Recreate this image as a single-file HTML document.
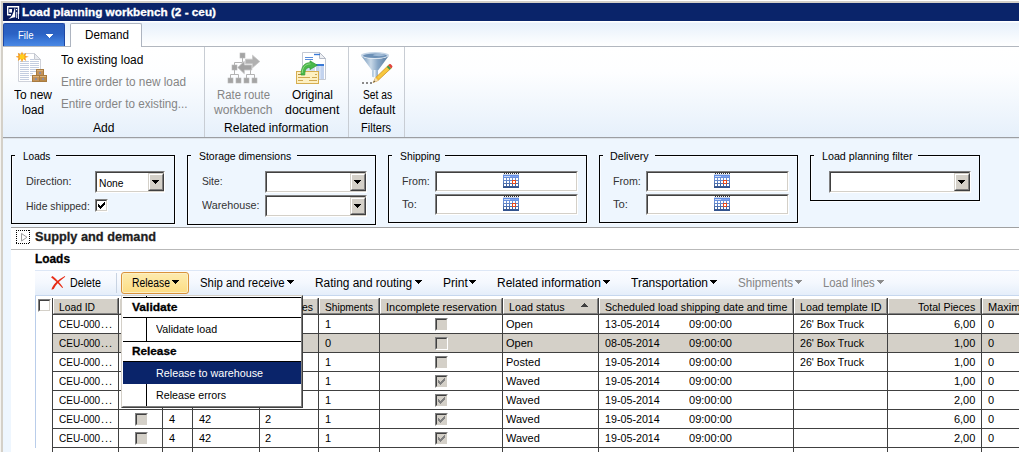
<!DOCTYPE html>
<html><head><meta charset="utf-8"><title>Load planning workbench</title>
<style>
html,body{margin:0;padding:0;}
html,body{overflow:hidden;background:#d4d0c8;}
#root{width:1019px;height:452px;overflow:hidden;position:relative;background:#d4d0c8;font-family:"Liberation Sans", "DejaVu Sans", sans-serif;font-size:11px;}
.t{position:absolute;white-space:nowrap;z-index:5;transform-origin:0 0;}

.a{position:absolute;}
#wl1{left:0;top:0;width:1px;bottom:0;background:#f4f3f0;}
#wl2{left:0;top:0;right:0;height:1px;background:#fff;}
#title{left:3px;top:3px;right:0;height:18px;background:#0a246a;}
#ticon{left:4px;top:4px;width:17px;height:16px;background:#071b58;}
#tabs{left:3px;top:21px;right:0;height:25px;background:linear-gradient(#ffffff 0,#ffffff 1px,#e7f0fb 2px,#f3f8fd 55%,#ffffff);}
#tabline{left:3px;top:46px;right:0;height:1px;background:#b2b7bf;}
#file{left:3px;top:23px;width:62px;height:23px;box-sizing:border-box;border:1px solid #1d46a3;border-bottom:none;border-radius:2px 2px 0 0;
  background:linear-gradient(#2a5cbb,#2b62c4 45%,#3b78d8 75%,#4a88e4);}
#filearrow{left:46px;top:34px;width:0;height:0;border-left:4px solid transparent;border-right:4px solid transparent;border-top:4px solid #fff;}
#demand{left:70px;top:23px;width:72px;height:24px;box-sizing:border-box;border:1px solid #adb4c0;border-bottom:none;border-radius:2px 2px 0 0;background:#fff;}
#ribbon{left:3px;top:47px;right:0;height:90px;background:linear-gradient(#ffffff,#fdfeff 28%,#e6f0fb);}
#ribline{left:3px;top:137px;right:0;height:2px;background:linear-gradient(#9c9ea2 50%,#dde3ea 50%);z-index:1;}
.rsep{top:47px;width:1px;height:90px;background:#c8cdd4;}
#farea{left:3px;top:138px;right:0;bottom:0;background:#eef6fe;}
.gb{box-sizing:border-box;border:1px solid #000;box-shadow:1px 1px 0 #fafcff,inset 1px 1px 0 #fafcff;}
.lg{background:#eef6fe;height:4px;}
.sunk{box-sizing:border-box;background:#fff;border:1px solid;border-color:#808080 #fff #fff #808080;}
.sunk>i{position:absolute;left:0;top:0;right:0;bottom:0;border:1px solid;border-color:#404040 #d4d0c8 #d4d0c8 #404040;}
.btn{box-sizing:border-box;background:#d4d0c8;border:1px solid;border-color:#d4d0c8 #404040 #404040 #d4d0c8;}
.btn>i{position:absolute;left:0;top:0;right:0;bottom:0;border:1px solid;border-color:#fff #808080 #808080 #fff;}
.darr{width:0;height:0;border-left:4px solid transparent;border-right:4px solid transparent;border-top:4px solid #000;}
#white{left:11px;top:228px;right:0;bottom:0;background:#fff;}
#wline{left:11px;top:227px;right:0;height:1px;background:#a0a0a0;}
#sline{left:11px;top:249px;right:0;height:1px;background:#b9b9b9;}
#tbar{left:35px;top:270px;right:0;height:25px;background:linear-gradient(#dde7f6 0,#dde7f6 1px,#fbfcff 1px,#f4f8fe 50%,#e5eefa);}
#tbline{left:35px;top:295px;right:0;height:1px;background:#c6d7ee;}
#tbsep{left:116px;top:273px;width:1px;height:20px;background:#c8d3e2;}
#relbtn{left:121px;top:272px;width:68px;height:22px;box-sizing:border-box;border:1px solid #d9923c;border-radius:3px;background:linear-gradient(#fdebb0,#fde499 50%,#fcdc84);box-shadow:inset 0 0 0 1px #fdf0c4;}
.marr{width:0;height:0;border-left:4px solid transparent;border-right:4px solid transparent;border-top:5px solid #000;}
.marr.dis{border-top-color:#8d8d8d;}
.vl{width:1px;background:#404040;}
.hl{height:1px;background:#404040;}
.hc{box-sizing:border-box;background:#d4d0c8;border:1px solid;border-color:#fff #808080 #808080 #fff;}
.cb{box-sizing:border-box;width:13px;height:13px;background:#d4d0c8;border:1px solid;border-color:#808080 #fff #fff #808080;}
.cb>i{position:absolute;left:0;top:0;right:0;bottom:0;border:1px solid;border-color:#404040 #d4d0c8 #d4d0c8 #404040;}
#menu{left:121px;top:295px;width:182px;height:113px;box-sizing:border-box;background:#fff;border:1px solid;border-color:#d4d0c8 #404040 #404040 #d4d0c8;z-index:3;}
#menu>i{position:absolute;left:0;top:0;right:0;bottom:0;border:1px solid;border-color:#fff #808080 #808080 #fff;}
.ml{background:#000;z-index:4;}
#msel{left:123px;top:362px;width:178px;height:22px;background:#0a246a;z-index:4;}

</style></head><body>
<div id="root">
<div class="a" id="wl1"></div><div class="a" id="wl2"></div>
<div class="a" id="title"></div>
<svg class="a" style="left:4px;top:3px" width="17" height="18" viewBox="0 0 17 18">
<rect width="17" height="18" fill="#06185a"/>
<path d="M3 3h12.200v8h-1.400V4.600H4.400V11H7v1.500H3z" fill="#fff"/>
<rect x="5.200" y="6" width="2.800" height="3.600" fill="#fff"/>
<path d="M4 16.200C7.500 14.800 9.500 10.500 10.500 5.300L11.200 5.300 11.200 14.200 8.500 14.700z" fill="#fff"/>
<rect x="12" y="6" width="1.200" height="1.200" fill="#fff"/>
<rect x="12.200" y="9" width="1" height="6" fill="#e8ecf8"/><rect x="14" y="11" width="1" height="5" fill="#e8ecf8"/>
</svg>
<div class="a" id="tabs"></div><div class="a" id="tabline"></div>
<div class="a" id="file"></div><svg class="a" style="left:46px;top:34px" width="7" height="4" viewBox="0 0 7 4" shape-rendering="crispEdges"><path d="M0 0h7v1h-1v1h-1v1h-1v1h-1v-1h-1v-1h-1v-1h-1z" fill="#fff"/></svg>
<div class="a" id="ribbon"></div><div class="a" id="ribline"></div>
<div class="a" id="demand"></div>
<div class="a rsep" style="left:204px"></div>
<div class="a rsep" style="left:348px"></div>
<div class="a rsep" style="left:404px"></div>

<!-- to new load -->
<svg class="a" style="left:16px;top:51px" width="32" height="32" viewBox="0 0 32 32">
<path d="M2.500 2.500h16l6 6v22h-22z" fill="#fff" stroke="#cfd2da"/>
<path d="M18.500 2.500v6h6z" fill="#e9ebf0" stroke="#c4c8d0"/>
<path d="M4 10.500h9M4 12.500h9M4 14.500h9M4 16.500h9M4 18.500h9M4 20.500h9M4 22.500h9M4 24.500h9M4 26.500h9M4 28.500h9M14 8.500h4M14 10.500h9M14 12.500h9M14 14.500h9M14 16.500h9M14 18.500h6M14 20.500h6M14 22.500h3M14 24.500h2" stroke="#c3cde0"/>
<path d="M6 0.500l1.300 3.200 2.900-2-0.800 3.300 3.400 0.700-3.400 1 0.800 3.300-2.900-2L6 11.200 4.700 8 1.800 10l0.800-3.300-3.400-1 3.400-0.700L1.800 1.700l2.900 2z" fill="#f89c1c"/>
<circle cx="6" cy="5.800" r="2.600" fill="#ffcf1f"/>
<rect x="20.500" y="18.500" width="7" height="6" fill="#c4935a" stroke="#a87b40"/>
<rect x="16.500" y="24.500" width="7" height="6" fill="#c4935a" stroke="#a87b40"/>
<rect x="23.500" y="24.500" width="7" height="6" fill="#b98a4a" stroke="#a87b40"/>
<path d="M21 19.500h6M17 25.500h6M24 25.500h6" stroke="#dcb27c"/>
<rect x="23" y="21" width="2" height="2" fill="#8c8ca0"/><rect x="19" y="27" width="2" height="2" fill="#8c8ca0"/><rect x="26" y="27" width="2" height="2" fill="#8c8ca0"/>
</svg>
<!-- rate route workbench (disabled) -->
<svg class="a" style="left:227px;top:52px" width="34" height="32" viewBox="0 0 34 32">
<path d="M15.500 6v4.500M7.500 13v-2.500h8M7.500 18v4.500M3.500 26v-3.500h8v3.500M19.500 26v-3.500h8v3.500M23.500 18v4.500" fill="none" stroke="#b4b4b4"/>
<g fill="#a4a4a4" stroke="#b8b8b8" stroke-width="0.600">
<rect x="13" y="1" width="5" height="5"/>
<rect x="5" y="13" width="5" height="5"/>
<rect x="1" y="26" width="5" height="5"/><rect x="9" y="26" width="5" height="5"/><rect x="17" y="26" width="5" height="5"/><rect x="25" y="26" width="5" height="5"/>
</g>
<path d="M18.500 7.200H25.500V3.200L32.800 9.500 25.500 15.800V11.800H18.500z" fill="#b0b0b0" stroke="#c6c6c6" stroke-width="0.800"/>
<path d="M24.800 13H17.300V9.300L10.700 15.500 17.300 21.700V18H24.800z" fill="#a2a2a2" stroke="#c6c6c6" stroke-width="0.800"/>
</svg>
<!-- original document -->
<svg class="a" style="left:295px;top:51px" width="33" height="33" viewBox="0 0 33 33">
<path d="M7.500 1.500h17l6 6v21h-23z" fill="#fff" stroke="#c3c8d2"/>
<path d="M24.500 1.500v6h6z" fill="#eef0f4" stroke="#b4bac6"/>
<path d="M19 3.500h6" stroke="#3b7ad6" stroke-width="1.400"/>
<path d="M10 6.500h8M10 8.500h8" stroke="#5a8edc" stroke-width="1"/>
<rect x="11" y="13" width="9" height="8" fill="#d3def2"/>
<rect x="21" y="13" width="8" height="15" fill="#c3d3ee"/>
<rect x="21" y="13" width="8" height="2" fill="#3b7ad6"/>
<path d="M25 15v13" stroke="#e4ecf8"/>
<rect x="1.500" y="20.500" width="22" height="12" fill="#fdf0c2" stroke="#d6ae50"/>
<path d="M3 23.500h6M3 26.500h12M17 26.500h5M3 29.500h5M14 29.500h8M20 23.500h2" stroke="#cfa850"/>
<path d="M3 23.500h6" stroke="#b08a3c"/>
<path d="M6 24C6 16 9 11.700 15 11.700V9.800L22.300 14.200 15 18.600V16.400C11.500 16.400 9.800 18.500 9.800 24z" fill="#49b84a" stroke="#2f9a33" stroke-width="0.700"/>
<path d="M7.200 22C7.400 16.500 10 13 15.500 12.900" fill="none" stroke="#9be08c" stroke-width="0.900"/>
</svg>
<!-- filter -->
<svg class="a" style="left:360px;top:51px" width="33" height="33" viewBox="0 0 33 33">
<defs><linearGradient id="fg" x1="0" x2="1"><stop offset="0" stop-color="#6d93b8"/><stop offset="0.350" stop-color="#c9d9e8"/><stop offset="0.600" stop-color="#87a6c6"/><stop offset="1" stop-color="#55799e"/></linearGradient>
<linearGradient id="fs" x1="0" x2="1"><stop offset="0" stop-color="#8fb0cf"/><stop offset="0.400" stop-color="#e4eef7"/><stop offset="1" stop-color="#7a9cc0"/></linearGradient></defs>
<path d="M1 4.500C3 7 9 7.800 15 7.800S27 7 29 4.500L18 19.500H12z" fill="url(#fg)"/>
<rect x="12.300" y="19" width="5.500" height="7.300" rx="1" fill="url(#fs)"/>
<ellipse cx="15" cy="4.200" rx="14" ry="3.100" fill="#c3d4e6"/>
<ellipse cx="15" cy="4.700" rx="12" ry="2.200" fill="#6c90b6"/>
<ellipse cx="19" cy="4" rx="6" ry="1.200" fill="#9fbad6"/>
<rect x="2" y="31" width="2" height="2" fill="#8a8a8a"/><rect x="6" y="31" width="2" height="2" fill="#8a8a8a"/><rect x="10" y="31" width="2" height="2" fill="#8a8a8a"/>
<path d="M13.200 31.500l2.300-4.700L29.200 13.600l2.800 2.800L18 29.500z" fill="#f7c83e" stroke="#c98a1e" stroke-width="0.700"/>
<path d="M16.500 26l2.300 2.400" stroke="#e6a82a" stroke-width="0.800"/>
<path d="M13.200 31.500l2.300-4.700 2.500 2.700z" fill="#f3dcb4"/>
<path d="M13.200 31.500l1-2 1 1z" fill="#444"/>
<path d="M26.800 15.900l2.800 2.800 1.300-1.300-2.800-2.800z" fill="#3f9a52"/>
<path d="M28.300 14.400l2.800 2.800 1.300-1.300c0.600-0.800-2-3.400-2.800-2.800z" fill="#e0443e"/>
</svg>

<div class="a" id="farea"></div>
<div class="a gb" style="left:11px;top:155px;width:164px;height:69px"></div><div class="a lg" style="left:15px;top:154px;width:41px"></div>
<div class="a gb" style="left:187px;top:155px;width:189px;height:70px"></div><div class="a lg" style="left:191px;top:154px;width:106px"></div>
<div class="a gb" style="left:388px;top:155px;width:199px;height:68px"></div><div class="a lg" style="left:392px;top:154px;width:53px"></div>
<div class="a gb" style="left:599px;top:155px;width:199px;height:68px"></div><div class="a lg" style="left:603px;top:154px;width:52px"></div>
<div class="a gb" style="left:810px;top:155px;width:170px;height:46px"></div><div class="a lg" style="left:814px;top:154px;width:104px"></div>
<div class="a sunk" style="left:95px;top:171px;width:70px;height:22px"><i></i></div><div class="a btn" style="left:148px;top:173px;width:16px;height:18px"><i></i></div><svg class="a" style="left:152px;top:180px" width="7" height="4" viewBox="0 0 7 4" shape-rendering="crispEdges"><path d="M0 0h7v1h-1v1h-1v1h-1v1h-1v-1h-1v-1h-1v-1h-1z" fill="#000"/></svg>
<div class="a cb" style="left:95px;top:199px;background:#fff"><i></i></div><svg class="a" style="left:98px;top:202px" width="7" height="7" viewBox="0 0 7 7" shape-rendering="crispEdges"><path d="M0 2h1v1h1v1h1v-1h1v-1h1v-1h1v-1h1v3h-1v1h-1v1h-1v1h-1v1h-1v-1h-1v-1h-1z" fill="#000"/></svg>
<div class="a sunk" style="left:265px;top:171px;width:102px;height:22px"><i></i></div><div class="a btn" style="left:350px;top:173px;width:16px;height:18px"><i></i></div><svg class="a" style="left:354px;top:180px" width="7" height="4" viewBox="0 0 7 4" shape-rendering="crispEdges"><path d="M0 0h7v1h-1v1h-1v1h-1v1h-1v-1h-1v-1h-1v-1h-1z" fill="#000"/></svg>
<div class="a sunk" style="left:265px;top:195px;width:102px;height:22px"><i></i></div><div class="a btn" style="left:350px;top:197px;width:16px;height:18px"><i></i></div><svg class="a" style="left:354px;top:204px" width="7" height="4" viewBox="0 0 7 4" shape-rendering="crispEdges"><path d="M0 0h7v1h-1v1h-1v1h-1v1h-1v-1h-1v-1h-1v-1h-1z" fill="#000"/></svg>
<div class="a sunk" style="left:435px;top:171px;width:143px;height:21px"><i></i></div>
<div class="a sunk" style="left:435px;top:194px;width:143px;height:21px"><i></i></div>
<svg class="a" style="left:503px;top:173px" width="16" height="15" viewBox="0 0 16 15" shape-rendering="crispEdges">
<defs><linearGradient id="cg" x1="0" y1="0" x2="0" y2="1"><stop offset="0" stop-color="#5c8cec"/><stop offset="0.350" stop-color="#6e92d6"/><stop offset="1" stop-color="#2f4f88"/></linearGradient></defs>
<rect x="0" y="1" width="16" height="14" fill="url(#cg)"/>
<rect x="0" y="1" width="16" height="1" fill="#c9d4ea"/>
<rect x="1" y="3" width="6" height="1" fill="#c4d6f8"/><rect x="7" y="3" width="8" height="1" fill="#7ea2f0"/>
<g fill="#303030"><rect x="1" y="0" width="1" height="1"/><rect x="3" y="0" width="1" height="1"/><rect x="5" y="0" width="1" height="1"/><rect x="7" y="0" width="1" height="1"/><rect x="9" y="0" width="1" height="1"/><rect x="11" y="0" width="1" height="1"/><rect x="13" y="0" width="1" height="1"/><rect x="15" y="0" width="1" height="1"/></g>
<g fill="#fff"><rect x="1" y="5" width="2" height="2"/><rect x="4" y="5" width="2" height="2"/><rect x="7" y="5" width="2" height="2"/><rect x="10" y="5" width="2" height="2"/><rect x="13" y="5" width="2" height="2"/><rect x="1" y="8" width="2" height="2"/><rect x="4" y="8" width="2" height="2"/><rect x="7" y="8" width="2" height="2"/><rect x="10" y="8" width="2" height="2"/><rect x="13" y="8" width="2" height="2"/><rect x="1" y="11" width="2" height="2"/><rect x="4" y="11" width="2" height="2"/><rect x="7" y="11" width="2" height="2"/><rect x="10" y="11" width="2" height="2"/><rect x="13" y="11" width="2" height="2"/></g>
<rect x="9" y="7" width="4" height="4" fill="#e8481a"/><rect x="10" y="8" width="2" height="2" fill="#fff"/>
</svg>
<svg class="a" style="left:503px;top:196px" width="16" height="15" viewBox="0 0 16 15" shape-rendering="crispEdges">
<defs><linearGradient id="cg" x1="0" y1="0" x2="0" y2="1"><stop offset="0" stop-color="#5c8cec"/><stop offset="0.350" stop-color="#6e92d6"/><stop offset="1" stop-color="#2f4f88"/></linearGradient></defs>
<rect x="0" y="1" width="16" height="14" fill="url(#cg)"/>
<rect x="0" y="1" width="16" height="1" fill="#c9d4ea"/>
<rect x="1" y="3" width="6" height="1" fill="#c4d6f8"/><rect x="7" y="3" width="8" height="1" fill="#7ea2f0"/>
<g fill="#303030"><rect x="1" y="0" width="1" height="1"/><rect x="3" y="0" width="1" height="1"/><rect x="5" y="0" width="1" height="1"/><rect x="7" y="0" width="1" height="1"/><rect x="9" y="0" width="1" height="1"/><rect x="11" y="0" width="1" height="1"/><rect x="13" y="0" width="1" height="1"/><rect x="15" y="0" width="1" height="1"/></g>
<g fill="#fff"><rect x="1" y="5" width="2" height="2"/><rect x="4" y="5" width="2" height="2"/><rect x="7" y="5" width="2" height="2"/><rect x="10" y="5" width="2" height="2"/><rect x="13" y="5" width="2" height="2"/><rect x="1" y="8" width="2" height="2"/><rect x="4" y="8" width="2" height="2"/><rect x="7" y="8" width="2" height="2"/><rect x="10" y="8" width="2" height="2"/><rect x="13" y="8" width="2" height="2"/><rect x="1" y="11" width="2" height="2"/><rect x="4" y="11" width="2" height="2"/><rect x="7" y="11" width="2" height="2"/><rect x="10" y="11" width="2" height="2"/><rect x="13" y="11" width="2" height="2"/></g>
<rect x="9" y="7" width="4" height="4" fill="#e8481a"/><rect x="10" y="8" width="2" height="2" fill="#fff"/>
</svg>
<div class="a sunk" style="left:646px;top:171px;width:143px;height:21px"><i></i></div>
<div class="a sunk" style="left:646px;top:194px;width:143px;height:21px"><i></i></div>
<svg class="a" style="left:714px;top:173px" width="16" height="15" viewBox="0 0 16 15" shape-rendering="crispEdges">
<defs><linearGradient id="cg" x1="0" y1="0" x2="0" y2="1"><stop offset="0" stop-color="#5c8cec"/><stop offset="0.350" stop-color="#6e92d6"/><stop offset="1" stop-color="#2f4f88"/></linearGradient></defs>
<rect x="0" y="1" width="16" height="14" fill="url(#cg)"/>
<rect x="0" y="1" width="16" height="1" fill="#c9d4ea"/>
<rect x="1" y="3" width="6" height="1" fill="#c4d6f8"/><rect x="7" y="3" width="8" height="1" fill="#7ea2f0"/>
<g fill="#303030"><rect x="1" y="0" width="1" height="1"/><rect x="3" y="0" width="1" height="1"/><rect x="5" y="0" width="1" height="1"/><rect x="7" y="0" width="1" height="1"/><rect x="9" y="0" width="1" height="1"/><rect x="11" y="0" width="1" height="1"/><rect x="13" y="0" width="1" height="1"/><rect x="15" y="0" width="1" height="1"/></g>
<g fill="#fff"><rect x="1" y="5" width="2" height="2"/><rect x="4" y="5" width="2" height="2"/><rect x="7" y="5" width="2" height="2"/><rect x="10" y="5" width="2" height="2"/><rect x="13" y="5" width="2" height="2"/><rect x="1" y="8" width="2" height="2"/><rect x="4" y="8" width="2" height="2"/><rect x="7" y="8" width="2" height="2"/><rect x="10" y="8" width="2" height="2"/><rect x="13" y="8" width="2" height="2"/><rect x="1" y="11" width="2" height="2"/><rect x="4" y="11" width="2" height="2"/><rect x="7" y="11" width="2" height="2"/><rect x="10" y="11" width="2" height="2"/><rect x="13" y="11" width="2" height="2"/></g>
<rect x="9" y="7" width="4" height="4" fill="#e8481a"/><rect x="10" y="8" width="2" height="2" fill="#fff"/>
</svg>
<svg class="a" style="left:714px;top:196px" width="16" height="15" viewBox="0 0 16 15" shape-rendering="crispEdges">
<defs><linearGradient id="cg" x1="0" y1="0" x2="0" y2="1"><stop offset="0" stop-color="#5c8cec"/><stop offset="0.350" stop-color="#6e92d6"/><stop offset="1" stop-color="#2f4f88"/></linearGradient></defs>
<rect x="0" y="1" width="16" height="14" fill="url(#cg)"/>
<rect x="0" y="1" width="16" height="1" fill="#c9d4ea"/>
<rect x="1" y="3" width="6" height="1" fill="#c4d6f8"/><rect x="7" y="3" width="8" height="1" fill="#7ea2f0"/>
<g fill="#303030"><rect x="1" y="0" width="1" height="1"/><rect x="3" y="0" width="1" height="1"/><rect x="5" y="0" width="1" height="1"/><rect x="7" y="0" width="1" height="1"/><rect x="9" y="0" width="1" height="1"/><rect x="11" y="0" width="1" height="1"/><rect x="13" y="0" width="1" height="1"/><rect x="15" y="0" width="1" height="1"/></g>
<g fill="#fff"><rect x="1" y="5" width="2" height="2"/><rect x="4" y="5" width="2" height="2"/><rect x="7" y="5" width="2" height="2"/><rect x="10" y="5" width="2" height="2"/><rect x="13" y="5" width="2" height="2"/><rect x="1" y="8" width="2" height="2"/><rect x="4" y="8" width="2" height="2"/><rect x="7" y="8" width="2" height="2"/><rect x="10" y="8" width="2" height="2"/><rect x="13" y="8" width="2" height="2"/><rect x="1" y="11" width="2" height="2"/><rect x="4" y="11" width="2" height="2"/><rect x="7" y="11" width="2" height="2"/><rect x="10" y="11" width="2" height="2"/><rect x="13" y="11" width="2" height="2"/></g>
<rect x="9" y="7" width="4" height="4" fill="#e8481a"/><rect x="10" y="8" width="2" height="2" fill="#fff"/>
</svg>
<div class="a sunk" style="left:829px;top:171px;width:142px;height:22px"><i></i></div><div class="a btn" style="left:954px;top:173px;width:16px;height:18px"><i></i></div><svg class="a" style="left:958px;top:180px" width="7" height="4" viewBox="0 0 7 4" shape-rendering="crispEdges"><path d="M0 0h7v1h-1v1h-1v1h-1v1h-1v-1h-1v-1h-1v-1h-1z" fill="#000"/></svg>
<div class="a" id="wline"></div><div class="a" id="white"></div><div class="a" id="sline"></div>
<svg class="a" style="left:16px;top:230px" width="14" height="14" viewBox="0 0 14 14">
<path d="M0.500 0v14M13.500 0v14M0 0.500h14M0 13.500h14" fill="none" stroke="#000" stroke-dasharray="1 1" shape-rendering="crispEdges"/>
<path d="M5.500 3.500v7.500l5.500-3.750z" fill="#fff" stroke="#9c9c9c"/></svg>
<div class="a" id="tbar"></div><div class="a" id="tbline"></div><div class="a" id="tbsep"></div>
<svg class="a" style="left:50px;top:275px" width="16" height="16" viewBox="0 0 16 16">
<path d="M1 2.300L2.600 1C6.500 4 10.200 8.300 13.100 12.400L12.300 13C9 9.300 5 5.200 1 2.300z" fill="#e8301a"/>
<path d="M14.900 1.100L15.200 1.800C10.500 5 6 9.500 3.700 14L1.500 14.700C2.200 10.500 8 4.500 14.900 1.100z" fill="#e62a14"/></svg>
<div class="a" id="relbtn"></div>
<svg class="a" style="left:172px;top:280px" width="7" height="4" viewBox="0 0 7 4" shape-rendering="crispEdges"><path d="M0 0h7v1h-1v1h-1v1h-1v1h-1v-1h-1v-1h-1v-1h-1z" fill="#000"/></svg>
<svg class="a" style="left:287px;top:280px" width="7" height="4" viewBox="0 0 7 4" shape-rendering="crispEdges"><path d="M0 0h7v1h-1v1h-1v1h-1v1h-1v-1h-1v-1h-1v-1h-1z" fill="#000"/></svg>
<svg class="a" style="left:415px;top:280px" width="7" height="4" viewBox="0 0 7 4" shape-rendering="crispEdges"><path d="M0 0h7v1h-1v1h-1v1h-1v1h-1v-1h-1v-1h-1v-1h-1z" fill="#000"/></svg>
<svg class="a" style="left:469px;top:280px" width="7" height="4" viewBox="0 0 7 4" shape-rendering="crispEdges"><path d="M0 0h7v1h-1v1h-1v1h-1v1h-1v-1h-1v-1h-1v-1h-1z" fill="#000"/></svg>
<svg class="a" style="left:603px;top:280px" width="7" height="4" viewBox="0 0 7 4" shape-rendering="crispEdges"><path d="M0 0h7v1h-1v1h-1v1h-1v1h-1v-1h-1v-1h-1v-1h-1z" fill="#000"/></svg>
<svg class="a" style="left:710px;top:280px" width="7" height="4" viewBox="0 0 7 4" shape-rendering="crispEdges"><path d="M0 0h7v1h-1v1h-1v1h-1v1h-1v-1h-1v-1h-1v-1h-1z" fill="#000"/></svg>
<svg class="a" style="left:795px;top:280px" width="7" height="4" viewBox="0 0 7 4" shape-rendering="crispEdges"><path d="M0 0h7v1h-1v1h-1v1h-1v1h-1v-1h-1v-1h-1v-1h-1z" fill="#8d8d8d"/></svg>
<svg class="a" style="left:877px;top:280px" width="7" height="4" viewBox="0 0 7 4" shape-rendering="crispEdges"><path d="M0 0h7v1h-1v1h-1v1h-1v1h-1v-1h-1v-1h-1v-1h-1z" fill="#8d8d8d"/></svg>
<div class="a" style="left:35px;top:296px;width:1px;height:152px;background:#b9cdea"></div>
<div class="a cb" style="left:38px;top:299px;background:#fff"><i></i></div>
<div class="a" style="left:53px;top:334px;right:0;height:18px;background:#d4d0c8"></div>
<div class="a hc" style="left:53px;top:298px;width:65px;height:16px"></div>
<div class="a hc" style="left:119px;top:298px;width:43px;height:16px"></div>
<div class="a hc" style="left:163px;top:298px;width:29px;height:16px"></div>
<div class="a hc" style="left:193px;top:298px;width:66px;height:16px"></div>
<div class="a hc" style="left:260px;top:298px;width:58px;height:16px"></div>
<div class="a hc" style="left:319px;top:298px;width:60px;height:16px"></div>
<div class="a hc" style="left:380px;top:298px;width:122px;height:16px"></div>
<div class="a hc" style="left:503px;top:298px;width:95px;height:16px"></div>
<div class="a hc" style="left:599px;top:298px;width:194px;height:16px"></div>
<div class="a hc" style="left:794px;top:298px;width:93px;height:16px"></div>
<div class="a hc" style="left:888px;top:298px;width:93px;height:16px"></div>
<div class="a hc" style="left:982px;top:298px;width:48px;height:16px"></div>
<div class="a vl" style="left:52px;top:298px;bottom:0"></div>
<div class="a vl" style="left:118px;top:298px;bottom:0"></div>
<div class="a vl" style="left:162px;top:298px;bottom:0"></div>
<div class="a vl" style="left:192px;top:298px;bottom:0"></div>
<div class="a vl" style="left:259px;top:298px;bottom:0"></div>
<div class="a vl" style="left:318px;top:298px;bottom:0"></div>
<div class="a vl" style="left:379px;top:298px;bottom:0"></div>
<div class="a vl" style="left:502px;top:298px;bottom:0"></div>
<div class="a vl" style="left:598px;top:298px;bottom:0"></div>
<div class="a vl" style="left:793px;top:298px;bottom:0"></div>
<div class="a vl" style="left:887px;top:298px;bottom:0"></div>
<div class="a vl" style="left:981px;top:298px;bottom:0"></div>
<div class="a hl" style="left:52px;top:314px;right:0"></div>
<div class="a hl" style="left:52px;top:333px;right:0"></div>
<div class="a hl" style="left:52px;top:352px;right:0"></div>
<div class="a hl" style="left:52px;top:371px;right:0"></div>
<div class="a hl" style="left:52px;top:390px;right:0"></div>
<div class="a hl" style="left:52px;top:409px;right:0"></div>
<div class="a hl" style="left:52px;top:428px;right:0"></div>
<div class="a hl" style="left:52px;top:447px;right:0"></div>
<svg class="a" style="left:581px;top:303px" width="7" height="4" viewBox="0 0 7 4" shape-rendering="crispEdges"><path d="M3 0h1v1h1v1h1v1h1v1h-7v-1h1v-1h1v-1h1z" fill="#404040"/></svg>
<div class="a cb" style="left:435px;top:318px;background:#d4d0c8"><i></i></div>
<div class="a cb" style="left:435px;top:337px;background:#d4d0c8"><i></i></div>
<div class="a cb" style="left:435px;top:356px;background:#d4d0c8"><i></i></div>
<div class="a cb" style="left:435px;top:375px;background:#d4d0c8"><i></i></div><svg class="a" style="left:438px;top:378px" width="7" height="7" viewBox="0 0 7 7" shape-rendering="crispEdges"><path d="M0 2h1v1h1v1h1v-1h1v-1h1v-1h1v-1h1v3h-1v1h-1v1h-1v1h-1v1h-1v-1h-1v-1h-1z" fill="#808080"/></svg>
<div class="a cb" style="left:435px;top:394px;background:#d4d0c8"><i></i></div><svg class="a" style="left:438px;top:397px" width="7" height="7" viewBox="0 0 7 7" shape-rendering="crispEdges"><path d="M0 2h1v1h1v1h1v-1h1v-1h1v-1h1v-1h1v3h-1v1h-1v1h-1v1h-1v1h-1v-1h-1v-1h-1z" fill="#808080"/></svg>
<div class="a cb" style="left:435px;top:413px;background:#d4d0c8"><i></i></div><svg class="a" style="left:438px;top:416px" width="7" height="7" viewBox="0 0 7 7" shape-rendering="crispEdges"><path d="M0 2h1v1h1v1h1v-1h1v-1h1v-1h1v-1h1v3h-1v1h-1v1h-1v1h-1v1h-1v-1h-1v-1h-1z" fill="#808080"/></svg>
<div class="a cb" style="left:135px;top:413px;background:#d4d0c8"><i></i></div>
<div class="a cb" style="left:435px;top:432px;background:#d4d0c8"><i></i></div><svg class="a" style="left:438px;top:435px" width="7" height="7" viewBox="0 0 7 7" shape-rendering="crispEdges"><path d="M0 2h1v1h1v1h1v-1h1v-1h1v-1h1v-1h1v3h-1v1h-1v1h-1v1h-1v1h-1v-1h-1v-1h-1z" fill="#808080"/></svg>
<div class="a cb" style="left:135px;top:432px;background:#d4d0c8"><i></i></div>
<div class="a" id="menu"><i></i></div>
<div class="a ml" style="left:123px;top:297px;width:178px;height:1px"></div>
<div class="a ml" style="left:146px;top:296px;width:1px;height:1px"></div>
<div class="a ml" style="left:123px;top:361px;width:178px;height:1px"></div>
<div class="a ml" style="left:123px;top:317px;width:178px;height:1px"></div>
<div class="a ml" style="left:123px;top:341px;width:178px;height:1px"></div>
<div class="a ml" style="left:146px;top:317px;width:1px;height:24px"></div>
<div class="a ml" style="left:146px;top:384px;width:1px;height:22px"></div>
<div class="a" id="msel"></div>
<span class="t" id="t0" style="top:5px;font-size:11px;line-height:15px;color:#fff;font-weight:bold;-webkit-text-stroke:0.3px #fff;left:22px;transform:scaleX(1.0688);">Load planning workbench (2 - ceu)</span>
<span class="t" id="t1" style="top:28px;font-size:11px;line-height:15px;color:#fff;left:17.5px;transform:scaleX(0.8740);">File</span>
<span class="t" id="t2" style="top:27px;font-size:12px;line-height:16px;color:#000;left:84.5px;transform:scaleX(0.9700);">Demand</span>
<span class="t" id="t3" style="top:52px;font-size:12px;line-height:16px;color:#000;left:61px;transform:scaleX(0.9949);">To existing load</span>
<span class="t" id="t4" style="top:74px;font-size:12px;line-height:16px;color:#858585;left:61px;transform:scaleX(0.9811);">Entire order to new load</span>
<span class="t" id="t5" style="top:96px;font-size:12px;line-height:16px;color:#858585;left:61px;transform:scaleX(0.9726);">Entire order to existing...</span>
<span class="t" id="t6" style="top:87px;font-size:12px;line-height:16px;color:#000;left:14px;transform:scaleX(0.9992);">To new</span>
<span class="t" id="t7" style="top:102px;font-size:12px;line-height:16px;color:#000;left:21.5px;transform:scaleX(0.9697);">load</span>
<span class="t" id="t8" style="top:120px;font-size:12px;line-height:16px;color:#000;left:93px;transform:scaleX(1.0066);">Add</span>
<span class="t" id="t9" style="top:87px;font-size:12px;line-height:16px;color:#858585;left:217px;transform:scaleX(0.9456);">Rate route</span>
<span class="t" id="t10" style="top:102px;font-size:12px;line-height:16px;color:#858585;left:213.8px;transform:scaleX(1.0098);">workbench</span>
<span class="t" id="t11" style="top:87px;font-size:12px;line-height:16px;color:#000;left:291.7px;transform:scaleX(0.9889);">Original</span>
<span class="t" id="t12" style="top:102px;font-size:12px;line-height:16px;color:#000;left:284.6px;transform:scaleX(1.0322);">document</span>
<span class="t" id="t13" style="top:120px;font-size:12px;line-height:16px;color:#000;left:224px;transform:scaleX(1.0032);">Related information</span>
<span class="t" id="t14" style="top:87px;font-size:12px;line-height:16px;color:#000;left:362.5px;transform:scaleX(0.8522);">Set as</span>
<span class="t" id="t15" style="top:102px;font-size:12px;line-height:16px;color:#000;left:358.7px;transform:scaleX(1.0075);">default</span>
<span class="t" id="t16" style="top:120px;font-size:12px;line-height:16px;color:#000;left:361.4px;transform:scaleX(0.9213);">Filters</span>
<span class="t" id="t17" style="top:149px;font-size:11px;line-height:15px;color:#000;left:22.6px;transform:scaleX(0.9138);">Loads</span>
<span class="t" id="t18" style="top:174px;font-size:11px;line-height:15px;color:#333;left:25.5px;transform:scaleX(0.9792);">Direction:</span>
<span class="t" id="t19" style="top:176px;font-size:11px;line-height:15px;color:#000;left:98.8px;transform:scaleX(0.9317);">None</span>
<span class="t" id="t20" style="top:199px;font-size:11px;line-height:15px;color:#333;left:25.7px;transform:scaleX(0.9483);">Hide shipped:</span>
<span class="t" id="t21" style="top:149px;font-size:11px;line-height:15px;color:#000;left:198.8px;transform:scaleX(0.9482);">Storage dimensions</span>
<span class="t" id="t22" style="top:174px;font-size:11px;line-height:15px;color:#333;left:201.5px;transform:scaleX(0.9312);">Site:</span>
<span class="t" id="t23" style="top:198px;font-size:11px;line-height:15px;color:#333;left:201.5px;transform:scaleX(0.9761);">Warehouse:</span>
<span class="t" id="t24" style="top:149px;font-size:11px;line-height:15px;color:#000;left:399.5px;transform:scaleX(0.9410);">Shipping</span>
<span class="t" id="t25" style="top:174px;font-size:11px;line-height:15px;color:#333;left:402px;transform:scaleX(0.9675);">From:</span>
<span class="t" id="t26" style="top:197px;font-size:11px;line-height:15px;color:#333;left:402px;transform:scaleX(1.0213);">To:</span>
<span class="t" id="t27" style="top:149px;font-size:11px;line-height:15px;color:#000;left:610.3px;transform:scaleX(0.9740);">Delivery</span>
<span class="t" id="t28" style="top:174px;font-size:11px;line-height:15px;color:#333;left:613.2px;transform:scaleX(0.9675);">From:</span>
<span class="t" id="t29" style="top:197px;font-size:11px;line-height:15px;color:#333;left:613.2px;transform:scaleX(1.0213);">To:</span>
<span class="t" id="t30" style="top:149px;font-size:11px;line-height:15px;color:#000;left:821.5px;transform:scaleX(0.9734);">Load planning filter</span>
<span class="t" id="t31" style="top:228px;font-size:13px;line-height:17px;color:#1e1e1e;font-weight:bold;-webkit-text-stroke:0.3px #1e1e1e;left:35px;transform:scaleX(0.9796);">Supply and demand</span>
<span class="t" id="t32" style="top:250px;font-size:13px;line-height:17px;color:#000;font-weight:bold;-webkit-text-stroke:0.3px #000;left:35px;transform:scaleX(0.9139);">Loads</span>
<span class="t" id="t33" style="top:275px;font-size:12px;line-height:16px;color:#000;left:70px;transform:scaleX(0.8937);">Delete</span>
<span class="t" id="t34" style="top:275px;font-size:12px;line-height:16px;color:#000;left:131.6px;transform:scaleX(0.8608);">Release</span>
<span class="t" id="t35" style="top:275px;font-size:12px;line-height:16px;color:#000;left:199.7px;transform:scaleX(0.9475);">Ship and receive</span>
<span class="t" id="t36" style="top:275px;font-size:12px;line-height:16px;color:#000;left:314.8px;transform:scaleX(0.9910);">Rating and routing</span>
<span class="t" id="t37" style="top:275px;font-size:12px;line-height:16px;color:#000;left:442.7px;transform:scaleX(1.0046);">Print</span>
<span class="t" id="t38" style="top:275px;font-size:12px;line-height:16px;color:#000;left:496.5px;transform:scaleX(0.9975);">Related information</span>
<span class="t" id="t39" style="top:275px;font-size:12px;line-height:16px;color:#000;left:630.5px;transform:scaleX(1.0008);">Transportation</span>
<span class="t" id="t40" style="top:275px;font-size:12px;line-height:16px;color:#858585;left:737.5px;transform:scaleX(0.9717);">Shipments</span>
<span class="t" id="t41" style="top:275px;font-size:12px;line-height:16px;color:#858585;left:822.6px;transform:scaleX(0.9448);">Load lines</span>
<span class="t" id="t42" style="top:300px;font-size:11px;line-height:15px;color:#000;left:59px;transform:scaleX(0.9343);">Load ID</span>
<span class="t" id="t43" style="top:300px;font-size:11px;line-height:15px;color:#000;left:302px;transform:scaleX(0.9462);">es</span>
<span class="t" id="t44" style="top:300px;font-size:11px;line-height:15px;color:#000;left:325px;transform:scaleX(0.9234);">Shipments</span>
<span class="t" id="t45" style="top:300px;font-size:11px;line-height:15px;color:#000;left:385.5px;transform:scaleX(0.9957);">Incomplete reservation</span>
<span class="t" id="t46" style="top:300px;font-size:11px;line-height:15px;color:#000;left:508.7px;transform:scaleX(0.9776);">Load status</span>
<span class="t" id="t47" style="top:300px;font-size:11px;line-height:15px;color:#000;left:604.7px;transform:scaleX(0.9615);">Scheduled load shipping date and time</span>
<span class="t" id="t48" style="top:300px;font-size:11px;line-height:15px;color:#000;left:799.5px;transform:scaleX(0.9728);">Load template ID</span>
<span class="t" id="t49" style="top:300px;font-size:11px;line-height:15px;color:#000;left:918px;transform:scaleX(0.9661);">Total Pieces</span>
<span class="t" id="t50" style="top:300px;font-size:11px;line-height:15px;color:#000;left:988px;">Maximum</span>
<span class="t" id="t51" style="top:317px;font-size:11px;line-height:15px;color:#000;left:59px;transform:scaleX(0.9105);">CEU-000</span>
<span class="t" id="t52" style="top:317px;font-size:11px;line-height:15px;color:#000;left:101px;letter-spacing:0.943px;">...</span>
<span class="t" id="t53" style="top:317px;font-size:11px;line-height:15px;color:#000;left:325px;">1</span>
<span class="t" id="t54" style="top:317px;font-size:11px;line-height:15px;color:#000;left:506px;">Open</span>
<span class="t" id="t55" style="top:317px;font-size:11px;line-height:15px;color:#000;left:604.7px;transform:scaleX(0.9737);">13-05-2014</span>
<span class="t" id="t56" style="top:317px;font-size:11px;line-height:15px;color:#000;left:689px;transform:scaleX(1.0040);">09:00:00</span>
<span class="t" id="t57" style="top:317px;font-size:11px;line-height:15px;color:#000;left:799.7px;transform:scaleX(0.9654);">26' Box Truck</span>
<span class="t" id="t58" style="top:317px;font-size:11px;line-height:15px;color:#000;right:43.700000000000045px;">6,00</span>
<span class="t" id="t59" style="top:317px;font-size:11px;line-height:15px;color:#000;left:988px;">0</span>
<span class="t" id="t60" style="top:336px;font-size:11px;line-height:15px;color:#000;left:59px;transform:scaleX(0.9105);">CEU-000</span>
<span class="t" id="t61" style="top:336px;font-size:11px;line-height:15px;color:#000;left:101px;letter-spacing:0.943px;">...</span>
<span class="t" id="t62" style="top:336px;font-size:11px;line-height:15px;color:#000;left:325px;">0</span>
<span class="t" id="t63" style="top:336px;font-size:11px;line-height:15px;color:#000;left:506px;">Open</span>
<span class="t" id="t64" style="top:336px;font-size:11px;line-height:15px;color:#000;left:604.7px;transform:scaleX(0.9737);">08-05-2014</span>
<span class="t" id="t65" style="top:336px;font-size:11px;line-height:15px;color:#000;left:689px;transform:scaleX(1.0040);">09:00:00</span>
<span class="t" id="t66" style="top:336px;font-size:11px;line-height:15px;color:#000;left:799.7px;transform:scaleX(0.9654);">26' Box Truck</span>
<span class="t" id="t67" style="top:336px;font-size:11px;line-height:15px;color:#000;right:43.700000000000045px;">1,00</span>
<span class="t" id="t68" style="top:336px;font-size:11px;line-height:15px;color:#000;left:988px;">0</span>
<span class="t" id="t69" style="top:355px;font-size:11px;line-height:15px;color:#000;left:59px;transform:scaleX(0.9105);">CEU-000</span>
<span class="t" id="t70" style="top:355px;font-size:11px;line-height:15px;color:#000;left:101px;letter-spacing:0.943px;">...</span>
<span class="t" id="t71" style="top:355px;font-size:11px;line-height:15px;color:#000;left:325px;">1</span>
<span class="t" id="t72" style="top:355px;font-size:11px;line-height:15px;color:#000;left:506px;">Posted</span>
<span class="t" id="t73" style="top:355px;font-size:11px;line-height:15px;color:#000;left:604.7px;transform:scaleX(0.9737);">19-05-2014</span>
<span class="t" id="t74" style="top:355px;font-size:11px;line-height:15px;color:#000;left:689px;transform:scaleX(1.0040);">09:00:00</span>
<span class="t" id="t75" style="top:355px;font-size:11px;line-height:15px;color:#000;left:799.7px;transform:scaleX(0.9654);">26' Box Truck</span>
<span class="t" id="t76" style="top:355px;font-size:11px;line-height:15px;color:#000;right:43.700000000000045px;">1,00</span>
<span class="t" id="t77" style="top:355px;font-size:11px;line-height:15px;color:#000;left:988px;">0</span>
<span class="t" id="t78" style="top:374px;font-size:11px;line-height:15px;color:#000;left:59px;transform:scaleX(0.9105);">CEU-000</span>
<span class="t" id="t79" style="top:374px;font-size:11px;line-height:15px;color:#000;left:101px;letter-spacing:0.943px;">...</span>
<span class="t" id="t80" style="top:374px;font-size:11px;line-height:15px;color:#000;left:325px;">1</span>
<span class="t" id="t81" style="top:374px;font-size:11px;line-height:15px;color:#000;left:506px;">Waved</span>
<span class="t" id="t82" style="top:374px;font-size:11px;line-height:15px;color:#000;left:604.7px;transform:scaleX(0.9737);">19-05-2014</span>
<span class="t" id="t83" style="top:374px;font-size:11px;line-height:15px;color:#000;left:689px;transform:scaleX(1.0040);">09:00:00</span>
<span class="t" id="t84" style="top:374px;font-size:11px;line-height:15px;color:#000;right:43.700000000000045px;">1,00</span>
<span class="t" id="t85" style="top:374px;font-size:11px;line-height:15px;color:#000;left:988px;">0</span>
<span class="t" id="t86" style="top:393px;font-size:11px;line-height:15px;color:#000;left:59px;transform:scaleX(0.9105);">CEU-000</span>
<span class="t" id="t87" style="top:393px;font-size:11px;line-height:15px;color:#000;left:101px;letter-spacing:0.943px;">...</span>
<span class="t" id="t88" style="top:393px;font-size:11px;line-height:15px;color:#000;left:325px;">1</span>
<span class="t" id="t89" style="top:393px;font-size:11px;line-height:15px;color:#000;left:506px;">Waved</span>
<span class="t" id="t90" style="top:393px;font-size:11px;line-height:15px;color:#000;left:604.7px;transform:scaleX(0.9737);">19-05-2014</span>
<span class="t" id="t91" style="top:393px;font-size:11px;line-height:15px;color:#000;left:689px;transform:scaleX(1.0040);">09:00:00</span>
<span class="t" id="t92" style="top:393px;font-size:11px;line-height:15px;color:#000;right:43.700000000000045px;">2,00</span>
<span class="t" id="t93" style="top:393px;font-size:11px;line-height:15px;color:#000;left:988px;">0</span>
<span class="t" id="t94" style="top:412px;font-size:11px;line-height:15px;color:#000;left:59px;transform:scaleX(0.9105);">CEU-000</span>
<span class="t" id="t95" style="top:412px;font-size:11px;line-height:15px;color:#000;left:101px;letter-spacing:0.943px;">...</span>
<span class="t" id="t96" style="top:412px;font-size:11px;line-height:15px;color:#000;left:325px;">1</span>
<span class="t" id="t97" style="top:412px;font-size:11px;line-height:15px;color:#000;left:506px;">Waved</span>
<span class="t" id="t98" style="top:412px;font-size:11px;line-height:15px;color:#000;left:604.7px;transform:scaleX(0.9737);">19-05-2014</span>
<span class="t" id="t99" style="top:412px;font-size:11px;line-height:15px;color:#000;left:689px;transform:scaleX(1.0040);">09:00:00</span>
<span class="t" id="t100" style="top:412px;font-size:11px;line-height:15px;color:#000;right:43.700000000000045px;">6,00</span>
<span class="t" id="t101" style="top:412px;font-size:11px;line-height:15px;color:#000;left:988px;">0</span>
<span class="t" id="t102" style="top:412px;font-size:11px;line-height:15px;color:#000;left:169px;">4</span>
<span class="t" id="t103" style="top:412px;font-size:11px;line-height:15px;color:#000;left:199px;">42</span>
<span class="t" id="t104" style="top:412px;font-size:11px;line-height:15px;color:#000;left:265px;">2</span>
<span class="t" id="t105" style="top:431px;font-size:11px;line-height:15px;color:#000;left:59px;transform:scaleX(0.9105);">CEU-000</span>
<span class="t" id="t106" style="top:431px;font-size:11px;line-height:15px;color:#000;left:101px;letter-spacing:0.943px;">...</span>
<span class="t" id="t107" style="top:431px;font-size:11px;line-height:15px;color:#000;left:325px;">1</span>
<span class="t" id="t108" style="top:431px;font-size:11px;line-height:15px;color:#000;left:506px;">Waved</span>
<span class="t" id="t109" style="top:431px;font-size:11px;line-height:15px;color:#000;left:604.7px;transform:scaleX(0.9737);">19-05-2014</span>
<span class="t" id="t110" style="top:431px;font-size:11px;line-height:15px;color:#000;left:689px;transform:scaleX(1.0040);">09:00:00</span>
<span class="t" id="t111" style="top:431px;font-size:11px;line-height:15px;color:#000;right:43.700000000000045px;">2,00</span>
<span class="t" id="t112" style="top:431px;font-size:11px;line-height:15px;color:#000;left:988px;">0</span>
<span class="t" id="t113" style="top:431px;font-size:11px;line-height:15px;color:#000;left:169px;">4</span>
<span class="t" id="t114" style="top:431px;font-size:11px;line-height:15px;color:#000;left:199px;">42</span>
<span class="t" id="t115" style="top:431px;font-size:11px;line-height:15px;color:#000;left:265px;">2</span>
<span class="t" id="t116" style="top:300px;font-size:11px;line-height:15px;color:#000;font-weight:bold;-webkit-text-stroke:0.3px #000;left:131.5px;transform:scaleX(1.0943);">Validate</span>
<span class="t" id="t117" style="top:322px;font-size:11px;line-height:15px;color:#000;left:156.4px;transform:scaleX(0.9730);">Validate load</span>
<span class="t" id="t118" style="top:344px;font-size:11px;line-height:15px;color:#000;font-weight:bold;-webkit-text-stroke:0.3px #000;left:131.5px;transform:scaleX(1.0699);">Release</span>
<span class="t" id="t119" style="top:366px;font-size:11px;line-height:15px;color:#fff;left:156.4px;transform:scaleX(0.9784);">Release to warehouse</span>
<span class="t" id="t120" style="top:388px;font-size:11px;line-height:15px;color:#000;left:156.4px;transform:scaleX(0.9717);">Release errors</span>
</div>
</body></html>
